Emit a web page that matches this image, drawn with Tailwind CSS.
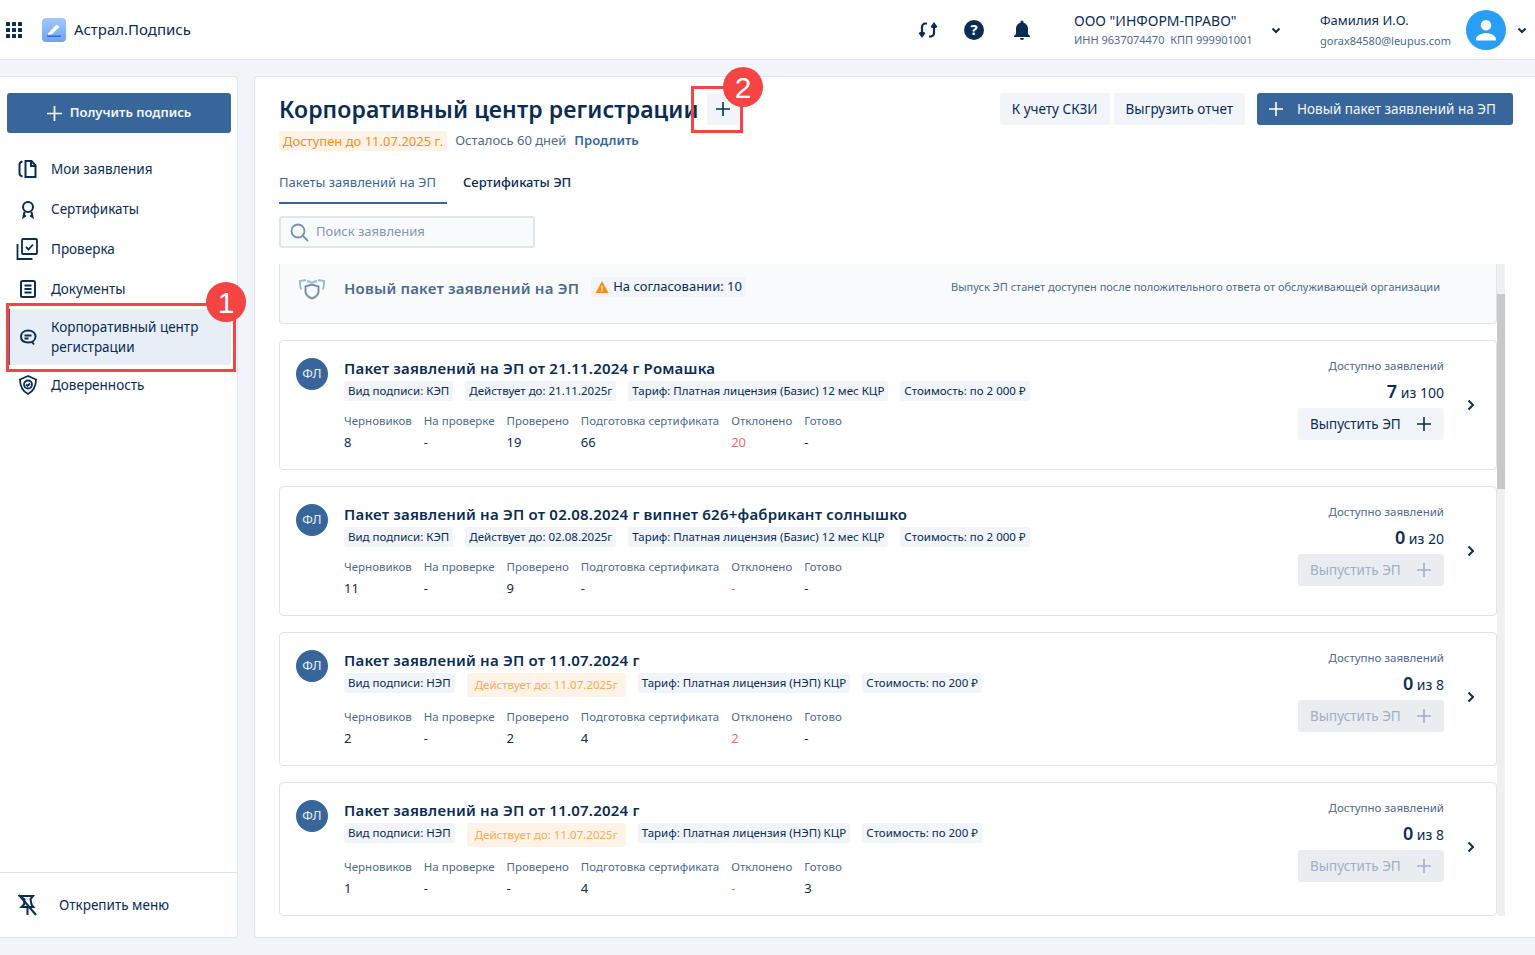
<!DOCTYPE html>
<html lang="ru">
<head>
  <meta charset="UTF-8" />
  <title>Астрал.Подпись</title>
  <script src="https://cdn.jsdelivr.net/npm/@tailwindcss/browser@4"></script>
</head>
<body class="relative h-[955px] w-[1535px] overflow-hidden bg-[#f1f4f8] font-['Noto_Sans',sans-serif] text-[#0b2c55]">

  <!-- Header -->
  <header class="flex h-[60px] items-center border-b border-[#dfe4ea] bg-white">
    <svg class="ml-[6px] h-4 w-4 fill-[#0b2c55]" viewBox="0 0 16 16">
      <rect x="0" y="0" width="4" height="4" rx=".6"/><rect x="6" y="0" width="4" height="4" rx=".6"/><rect x="12" y="0" width="4" height="4" rx=".6"/>
      <rect x="0" y="6" width="4" height="4" rx=".6"/><rect x="6" y="6" width="4" height="4" rx=".6"/><rect x="12" y="6" width="4" height="4" rx=".6"/>
      <rect x="0" y="12" width="4" height="4" rx=".6"/><rect x="6" y="12" width="4" height="4" rx=".6"/><rect x="12" y="12" width="4" height="4" rx=".6"/>
    </svg>
    <div class="ml-[20px] flex h-6 w-6 items-center justify-center rounded-[4px] bg-gradient-to-b from-[#a3c8fb] to-[#6ea2f7]">
      <svg class="h-6 w-6" viewBox="0 0 24 24"><path d="M6 15.5 14.5 6.5l3 2.6L9.5 16.5H6z" fill="#fff"/><rect x="5" y="17.500" width="14" height="1.500" fill="#2f6fd0"/></svg>
    </div>
    <span class="ml-2 text-[15px] text-[#0b2c55]">Астрал.Подпись</span>

    <div class="ml-auto flex items-center">
      <svg class="h-6 w-6" viewBox="0 0 24 24" fill="none" stroke="#0b2c55" stroke-width="2.200"><path d="M11 5.500H9.500A3.500 3.500 0 0 0 6 9v9"/><path d="M3.500 14.500 6 18l2.500-3.500" fill="#0b2c55"/><path d="M13 18.500h1.500A3.500 3.500 0 0 0 18 15V6"/><path d="M15.500 9.500 18 6l2.500 3.500" fill="#0b2c55"/></svg>
      <div class="ml-6 flex h-5 w-5 items-center justify-center rounded-full bg-[#0b2c55] text-[15px] leading-none font-bold text-white">?</div>
      <svg class="ml-[26px] h-6 w-6 fill-[#0b2c55]" viewBox="0 0 24 24"><path d="M12 22a2 2 0 0 0 2-2h-4a2 2 0 0 0 2 2zm6-6v-5c0-3.100-1.600-5.600-4.500-6.300V4a1.500 1.500 0 0 0-3 0v.7C7.600 5.400 6 7.900 6 11v5l-2 2v1h16v-1z"/></svg>
    </div>

    <div class="ml-[40px] flex w-[192px] flex-col">
      <span class="text-[14px] leading-[20px]">ООО "ИНФОРМ-ПРАВО"</span>
      <span class="mt-[1px] text-[11px] leading-[16px] whitespace-nowrap text-[#4d6a8f]">ИНН 9637074470&nbsp;&nbsp;КПП 999901001</span>
    </div>
    <svg class="ml-[4px] h-3 w-3" viewBox="0 0 12 12" fill="none" stroke="#0b2c55" stroke-width="2"><path d="M2.500 4.500 6 8l3.500-3.500"/></svg>
    <div class="ml-[38px] flex w-[146px] flex-col">
      <span class="text-[13px] leading-[20px]">Фамилия И.О.</span>
      <span class="mt-[3px] text-[11px] leading-[16px] whitespace-nowrap text-[#4d6a8f]">gorax84580@leupus.com</span>
    </div>
    <div class="flex h-10 w-10 items-center justify-center rounded-full bg-[#2a9df4]">
      <svg class="h-7 w-7 fill-white" viewBox="0 0 24 24"><circle cx="12" cy="8" r="4.500"/><path d="M3.500 21v-1.500c0-3 5.600-5 8.500-5s8.500 2 8.500 5V21z"/></svg>
    </div>
    <svg class="mr-[7px] ml-[10px] h-3 w-3" viewBox="0 0 12 12" fill="none" stroke="#0b2c55" stroke-width="2"><path d="M2.500 4.500 6 8l3.500-3.500"/></svg>
  </header>

  <div class="mt-4 flex h-[862px] gap-4">
    <!-- Sidebar -->
    <aside class="flex w-[238px] flex-col rounded-r-[4px] border border-l-0 border-[#dfe4ea] bg-white">
      <div class="mt-4 ml-[7px] flex h-10 w-[224px] items-center justify-center gap-2 rounded-[3px] bg-[#38669a] text-[13px] font-semibold text-[#f4f7fa]">
        <svg class="h-[15px] w-[15px]" viewBox="0 0 15 15" stroke="#fff" stroke-width="1.700"><path d="M7.500 0v15M0 7.500h15"/></svg>
        Получить подпись
      </div>

      <nav class="mt-4 flex flex-col text-[13.500px]">
        <a class="flex h-10 items-center pl-[18px]">
          <svg class="h-5 w-5" viewBox="0 0 20 20" fill="none" stroke="#0b2c55" stroke-width="2"><path d="M4.500 2.500C2.500 3 1.500 4 1.500 5.500v9c0 1.500 1 2.500 3 3"/><path d="M7.500 2h6l4 4.500V18h-10z"/><path d="M13 2v5h4.500"/></svg>
          <span class="ml-[13px]">Мои заявления</span>
        </a>
        <a class="flex h-10 items-center pl-[18px]">
          <svg class="h-5 w-5" viewBox="0 0 20 20" fill="none" stroke="#0b2c55" stroke-width="2"><circle cx="10" cy="8" r="5"/><path d="M6.500 13 5.500 18l2.500-1.500M13.500 13l1 5-2.500-1.500"/></svg>
          <span class="ml-[13px]">Сертификаты</span>
        </a>
        <a class="flex h-10 items-center pl-[16px]">
          <svg class="h-[22px] w-[22px]" viewBox="0 0 22 22" fill="none" stroke="#0b2c55" stroke-width="1.800"><rect x="6" y="1" width="15" height="15" rx="1"/><path d="M1.500 6v15h15"/><path d="m10 9 2.500 2.500 4.500-5"/></svg>
          <span class="ml-[13px]">Проверка</span>
        </a>
        <a class="flex h-10 items-center pl-[18px]">
          <svg class="h-5 w-5" viewBox="0 0 20 20" fill="none" stroke="#0b2c55" stroke-width="2"><rect x="3" y="2" width="14" height="16" rx="1.500"/><path d="M6.500 6.500h7M6.500 10h7M6.500 13.500h7"/></svg>
          <span class="ml-[13px]">Документы</span>
        </a>
        <a class="mt-[0px] ml-[8px] flex h-14 w-[223px] items-center rounded-r-[4px] border-l-2 border-[#38669a] bg-[#e8eef6] pl-[8px]">
          <svg class="h-5 w-5" viewBox="0 0 20 20" fill="none" stroke="#0b2c55" stroke-width="2"><path d="M10 3.500c4.500 0 7.500 2.500 7.500 6s-3 6-7 6c-5 0-7.500-2.500-7.500-6s3-6 7-6zM14 15l2 2.500"/><path d="M6.500 8.500h7M6.500 11.500h4"/></svg>
          <span class="ml-[13px] leading-[20px]">Корпоративный центр<br />регистрации</span>
        </a>
        <a class="flex h-10 items-center pl-[18px]">
          <svg class="h-5 w-5" viewBox="0 0 20 20" fill="none" stroke="#0b2c55" stroke-width="1.800"><path d="M10 1 2 4.500c0 7 2.500 11.500 8 14.500 5.500-3 8-7.500 8-14.500z"/><circle cx="10" cy="9.500" r="4"/><path d="m8 9.500 1.500 1.500 2.500-2.500"/></svg>
          <span class="ml-[13px]">Доверенность</span>
        </a>
      </nav>

      <div class="mt-auto flex h-[65px] items-center border-t border-[#dfe4ea] pl-[18px] text-[13.500px]">
        <svg class="h-[22px] w-[20px]" viewBox="0 0 20 22" fill="none" stroke="#0b2c55" stroke-width="2"><path d="M2 2h13l-2.500 3 1 5.500 2 2.500H3.500L6 10.500l.5-5z"/><path d="M9.500 13v8M1 1l17 20"/></svg>
        <span class="ml-[21px]">Открепить меню</span>
      </div>
    </aside>

    <!-- Main -->
    <main class="flex flex-1 flex-col rounded-l-[4px] border border-r-0 border-[#dfe4ea] bg-white pt-4 pl-6">
      <div class="flex items-start pr-[22px]">
        <div>
          <div class="flex h-8 items-center">
            <h1 class="text-[23px] font-semibold tracking-[0.1px] whitespace-nowrap">Корпоративный центр регистрации</h1>
            <div class="ml-[8px] flex h-8 w-8 items-center justify-center rounded-[3px] bg-[#f1f4f8]">
              <svg class="h-[14px] w-[14px]" viewBox="0 0 14 14" stroke="#0b2c55" stroke-width="1.600"><path d="M7 0v14M0 7h14"/></svg>
            </div>
          </div>
          <div class="mt-[6px] flex h-5 items-center text-[13px]">
            <span class="rounded-[3px] bg-[#fff3e8] px-1 leading-[20px] text-[#f98e16]">Доступен до 11.07.2025 г.</span>
            <span class="ml-2 text-[#4d6a8f]">Осталось 60 дней</span>
            <span class="ml-2 font-semibold text-[#38669a]">Продлить</span>
          </div>
        </div>
        <div class="ml-auto flex items-center text-[13.500px]">
          <div class="flex h-8 items-center rounded-[3px] bg-[#f1f4f8] px-3">К учету СКЗИ</div>
          <div class="ml-1 flex h-8 items-center rounded-[3px] bg-[#f1f4f8] px-3">Выгрузить отчет</div>
          <div class="ml-3 flex h-8 w-[256px] items-center rounded-[3px] bg-[#38669a] pl-3 text-[#f4f7fa]">
            <svg class="h-[14px] w-[14px]" viewBox="0 0 14 14" stroke="#fff" stroke-width="1.600"><path d="M7 0v14M0 7h14"/></svg>
            <span class="ml-[14px]">Новый пакет заявлений на ЭП</span>
          </div>
        </div>
      </div>

      <div class="mt-[21px] flex text-[13px]">
        <div class="h-[32px] w-[168px] border-b-2 border-[#38669a] leading-[20px] text-[#38669a]">Пакеты заявлений на ЭП</div>
        <div class="ml-4 leading-[20px] font-medium">Сертификаты ЭП</div>
      </div>

      <div class="mt-3 flex h-8 w-[256px] items-center rounded-[3px] border-2 border-[#dfe5ec] bg-[#f9fafc] pl-[9px] text-[13px] text-[#8097b3]">
        <svg class="h-[19px] w-[19px]" viewBox="0 0 19 19" fill="none" stroke="#7490b2" stroke-width="1.800"><circle cx="8" cy="8" r="6.500"/><path d="m13 13 5 5"/></svg>
        <span class="ml-[7px]">Поиск заявления</span>
      </div>

      <!-- List -->
      <div class="relative mt-4 flex h-[652px] overflow-hidden">
        <div class="flex w-[1218px] flex-col gap-4">
          <div class="flex h-[60px] shrink-0 items-start rounded-b-[4px] border border-t-0 border-[#dfe4ea] bg-[#f9fafc] pt-[13px] pl-[17px]">
            <svg class="h-[24px] w-[30px]" viewBox="0 0 30 24" fill="none" stroke-width="2"><path d="M9 3 3 4v3c0 2 .5 4 1.500 5.500M21 3l6 1v3c0 2-.5 4-1.500 5.500M10 4c2 .5 3 1 5 1.500 2-.5 3-1 5-1.500" stroke="#9cbbdc"/><path d="M15 7.500 8.500 9.500v5c0 3 2.500 5.500 6.500 7 4-1.500 6.500-4 6.500-7v-5z" stroke="#7c90a8"/></svg>
            <span class="ml-[17px] text-[15px] font-semibold tracking-[0.2px] text-[#4d6a8f]">Новый пакет заявлений на ЭП</span>
            <span class="ml-3 flex h-5 items-center rounded-[3px] bg-[#f1f4f8] px-1 text-[13px]">
              <svg class="mr-1 h-[14px] w-[14px] fill-[#f98e16]" viewBox="0 0 14 14"><path d="M7 1 .500 13h13z"/><path d="M6.400 5.500h1.200v4H6.400zM6.400 10.300h1.200v1.200H6.400z" fill="#fff"/></svg>
              На согласовании: 10
            </span>
            <span class="mt-[2px] mr-[56px] ml-auto text-[11px] text-[#4d6a8f]">Выпуск ЭП станет доступен после положительного ответа от обслуживающей организации</span>
          </div>

          <!-- Card 1 -->
          <div class="flex h-[130px] shrink-0 rounded-[4px] border border-[#dfe4ea] bg-white pt-[17px] pl-4">
            <div class="flex h-8 w-8 shrink-0 items-center justify-center rounded-full bg-[#38669a] text-[13px] text-[#e8eef6]">ФЛ</div>
            <div class="ml-4 flex-1">
              <div class="text-[15px] leading-[20px] font-semibold tracking-[0.2px]">Пакет заявлений на ЭП от 21.11.2024 г Ромашка</div>
              <div class="mt-[3px] flex items-start gap-3 text-[11.500px] leading-[20px]">
                <span class="rounded-[3px] bg-[#f1f4f8] px-1">Вид подписи: КЭП</span>
                <span class="rounded-[3px] bg-[#f1f4f8] px-1">Действует до: 21.11.2025г</span>
                <span class="rounded-[3px] bg-[#f1f4f8] px-1">Тариф: Платная лицензия (Базис) 12 мес КЦР</span>
                <span class="rounded-[3px] bg-[#f1f4f8] px-1">Стоимость: по 2 000 ₽</span>
              </div>
              <div class="mt-[10px] flex gap-3 text-[11.500px] leading-[20px] text-[#4d6a8f]">
                <div>Черновиков<div class="mt-[1px] text-[13px] text-[#0b2c55]">8</div></div>
                <div>На проверке<div class="mt-[1px] text-[13px] text-[#0b2c55]">-</div></div>
                <div>Проверено<div class="mt-[1px] text-[13px] text-[#0b2c55]">19</div></div>
                <div>Подготовка сертификата<div class="mt-[1px] text-[13px] text-[#0b2c55]">66</div></div>
                <div>Отклонено<div class="mt-[1px] text-[13px] text-[#f56c6c]">20</div></div>
                <div>Готово<div class="mt-[1px] text-[13px] text-[#0b2c55]">-</div></div>
              </div>
            </div>
            <div class="flex w-[146px] shrink-0 flex-col items-end">
              <span class="mt-[-2px] text-[11.500px] leading-[20px] text-[#4d6a8f]">Доступно заявлений</span>
              <span class="mt-[2px] text-[14px] leading-[26px]"><b class="text-[18px] font-semibold">7</b> из 100</span>
              <div class="mt-[2px] flex h-8 w-[146px] items-center rounded-[3px] bg-[#f1f4f8] pl-3 text-[13.500px]">Выпустить ЭП<svg class="ml-auto mr-[13px] h-[14px] w-[14px]" viewBox="0 0 14 14" stroke="#0b2c55" stroke-width="1.600"><path d="M7 0v14M0 7h14"/></svg></div>
            </div>
            <svg class="mt-[41px] mr-[21px] ml-[23px] h-3 w-2" viewBox="0 0 8 12" fill="none" stroke="#0b2c55" stroke-width="2"><path d="m1.500 1.500 4.500 4.500-4.500 4.500"/></svg>
          </div>

          <!-- Card 2 -->
          <div class="flex h-[130px] shrink-0 rounded-[4px] border border-[#dfe4ea] bg-white pt-[17px] pl-4">
            <div class="flex h-8 w-8 shrink-0 items-center justify-center rounded-full bg-[#38669a] text-[13px] text-[#e8eef6]">ФЛ</div>
            <div class="ml-4 flex-1">
              <div class="text-[15px] leading-[20px] font-semibold tracking-[0.2px]">Пакет заявлений на ЭП от 02.08.2024 г випнет 626+фабрикант солнышко</div>
              <div class="mt-[3px] flex items-start gap-3 text-[11.500px] leading-[20px]">
                <span class="rounded-[3px] bg-[#f1f4f8] px-1">Вид подписи: КЭП</span>
                <span class="rounded-[3px] bg-[#f1f4f8] px-1">Действует до: 02.08.2025г</span>
                <span class="rounded-[3px] bg-[#f1f4f8] px-1">Тариф: Платная лицензия (Базис) 12 мес КЦР</span>
                <span class="rounded-[3px] bg-[#f1f4f8] px-1">Стоимость: по 2 000 ₽</span>
              </div>
              <div class="mt-[10px] flex gap-3 text-[11.500px] leading-[20px] text-[#4d6a8f]">
                <div>Черновиков<div class="mt-[1px] text-[13px] text-[#0b2c55]">11</div></div>
                <div>На проверке<div class="mt-[1px] text-[13px] text-[#0b2c55]">-</div></div>
                <div>Проверено<div class="mt-[1px] text-[13px] text-[#0b2c55]">9</div></div>
                <div>Подготовка сертификата<div class="mt-[1px] text-[13px] text-[#0b2c55]">-</div></div>
                <div>Отклонено<div class="mt-[1px] text-[13px] text-[#f56c6c]">-</div></div>
                <div>Готово<div class="mt-[1px] text-[13px] text-[#0b2c55]">-</div></div>
              </div>
            </div>
            <div class="flex w-[146px] shrink-0 flex-col items-end">
              <span class="mt-[-2px] text-[11.500px] leading-[20px] text-[#4d6a8f]">Доступно заявлений</span>
              <span class="mt-[2px] text-[14px] leading-[26px]"><b class="text-[18px] font-semibold">0</b> из 20</span>
              <div class="mt-[2px] flex h-8 w-[146px] items-center rounded-[3px] bg-[#e9edf2] pl-3 text-[13.500px] text-[#9fb0c5]">Выпустить ЭП<svg class="ml-auto mr-[13px] h-[14px] w-[14px]" viewBox="0 0 14 14" stroke="#9fb0c5" stroke-width="1.600"><path d="M7 0v14M0 7h14"/></svg></div>
            </div>
            <svg class="mt-[41px] mr-[21px] ml-[23px] h-3 w-2" viewBox="0 0 8 12" fill="none" stroke="#0b2c55" stroke-width="2"><path d="m1.500 1.500 4.500 4.500-4.500 4.500"/></svg>
          </div>

          <!-- Card 3 -->
          <div class="flex h-[134px] shrink-0 rounded-[4px] border border-[#dfe4ea] bg-white pt-[17px] pl-4">
            <div class="flex h-8 w-8 shrink-0 items-center justify-center rounded-full bg-[#38669a] text-[13px] text-[#e8eef6]">ФЛ</div>
            <div class="ml-4 flex-1">
              <div class="text-[15px] leading-[20px] font-semibold tracking-[0.2px]">Пакет заявлений на ЭП от 11.07.2024 г</div>
              <div class="mt-[3px] flex items-start gap-3 text-[11.500px] leading-[20px]">
                <span class="rounded-[3px] bg-[#f1f4f8] px-1">Вид подписи: НЭП</span>
                <span class="rounded-[3px] bg-[#fff3e8] px-2 leading-[24px] text-[#fba94f]">Действует до: 11.07.2025г</span>
                <span class="rounded-[3px] bg-[#f1f4f8] px-1">Тариф: Платная лицензия (НЭП) КЦР</span>
                <span class="rounded-[3px] bg-[#f1f4f8] px-1">Стоимость: по 200 ₽</span>
              </div>
              <div class="mt-[10px] flex gap-3 text-[11.500px] leading-[20px] text-[#4d6a8f]">
                <div>Черновиков<div class="mt-[1px] text-[13px] text-[#0b2c55]">2</div></div>
                <div>На проверке<div class="mt-[1px] text-[13px] text-[#0b2c55]">-</div></div>
                <div>Проверено<div class="mt-[1px] text-[13px] text-[#0b2c55]">2</div></div>
                <div>Подготовка сертификата<div class="mt-[1px] text-[13px] text-[#0b2c55]">4</div></div>
                <div>Отклонено<div class="mt-[1px] text-[13px] text-[#f56c6c]">2</div></div>
                <div>Готово<div class="mt-[1px] text-[13px] text-[#0b2c55]">-</div></div>
              </div>
            </div>
            <div class="flex w-[146px] shrink-0 flex-col items-end">
              <span class="mt-[-2px] text-[11.500px] leading-[20px] text-[#4d6a8f]">Доступно заявлений</span>
              <span class="mt-[2px] text-[14px] leading-[26px]"><b class="text-[18px] font-semibold">0</b> из 8</span>
              <div class="mt-[2px] flex h-8 w-[146px] items-center rounded-[3px] bg-[#e9edf2] pl-3 text-[13.500px] text-[#9fb0c5]">Выпустить ЭП<svg class="ml-auto mr-[13px] h-[14px] w-[14px]" viewBox="0 0 14 14" stroke="#9fb0c5" stroke-width="1.600"><path d="M7 0v14M0 7h14"/></svg></div>
            </div>
            <svg class="mt-[41px] mr-[21px] ml-[23px] h-3 w-2" viewBox="0 0 8 12" fill="none" stroke="#0b2c55" stroke-width="2"><path d="m1.500 1.500 4.500 4.500-4.500 4.500"/></svg>
          </div>

          <!-- Card 4 -->
          <div class="flex h-[134px] shrink-0 rounded-[4px] border border-[#dfe4ea] bg-white pt-[17px] pl-4">
            <div class="flex h-8 w-8 shrink-0 items-center justify-center rounded-full bg-[#38669a] text-[13px] text-[#e8eef6]">ФЛ</div>
            <div class="ml-4 flex-1">
              <div class="text-[15px] leading-[20px] font-semibold tracking-[0.2px]">Пакет заявлений на ЭП от 11.07.2024 г</div>
              <div class="mt-[3px] flex items-start gap-3 text-[11.500px] leading-[20px]">
                <span class="rounded-[3px] bg-[#f1f4f8] px-1">Вид подписи: НЭП</span>
                <span class="rounded-[3px] bg-[#fff3e8] px-2 leading-[24px] text-[#fba94f]">Действует до: 11.07.2025г</span>
                <span class="rounded-[3px] bg-[#f1f4f8] px-1">Тариф: Платная лицензия (НЭП) КЦР</span>
                <span class="rounded-[3px] bg-[#f1f4f8] px-1">Стоимость: по 200 ₽</span>
              </div>
              <div class="mt-[10px] flex gap-3 text-[11.500px] leading-[20px] text-[#4d6a8f]">
                <div>Черновиков<div class="mt-[1px] text-[13px] text-[#0b2c55]">1</div></div>
                <div>На проверке<div class="mt-[1px] text-[13px] text-[#0b2c55]">-</div></div>
                <div>Проверено<div class="mt-[1px] text-[13px] text-[#0b2c55]">-</div></div>
                <div>Подготовка сертификата<div class="mt-[1px] text-[13px] text-[#0b2c55]">4</div></div>
                <div>Отклонено<div class="mt-[1px] text-[13px] text-[#f56c6c]">-</div></div>
                <div>Готово<div class="mt-[1px] text-[13px] text-[#0b2c55]">3</div></div>
              </div>
            </div>
            <div class="flex w-[146px] shrink-0 flex-col items-end">
              <span class="mt-[-2px] text-[11.500px] leading-[20px] text-[#4d6a8f]">Доступно заявлений</span>
              <span class="mt-[2px] text-[14px] leading-[26px]"><b class="text-[18px] font-semibold">0</b> из 8</span>
              <div class="mt-[2px] flex h-8 w-[146px] items-center rounded-[3px] bg-[#e9edf2] pl-3 text-[13.500px] text-[#9fb0c5]">Выпустить ЭП<svg class="ml-auto mr-[13px] h-[14px] w-[14px]" viewBox="0 0 14 14" stroke="#9fb0c5" stroke-width="1.600"><path d="M7 0v14M0 7h14"/></svg></div>
            </div>
            <svg class="mt-[41px] mr-[21px] ml-[23px] h-3 w-2" viewBox="0 0 8 12" fill="none" stroke="#0b2c55" stroke-width="2"><path d="m1.500 1.500 4.500 4.500-4.500 4.500"/></svg>
          </div>
        </div>

        <!-- Scrollbar -->
        <div class="h-full w-2 bg-[#f0f0f0]">
          <div class="mt-[30px] h-[195px] w-2 bg-[#c8c8c8]"></div>
        </div>
      </div>
    </main>
  </div>

  <!-- Annotation callouts -->
  <div class="absolute top-[303px] left-[6px] h-[69px] w-[230px] border-[3px] border-[#f44444]"></div>
  <div class="absolute top-[282px] left-[206px] flex h-10 w-10 items-center justify-center rounded-full bg-[#f44444] font-['Liberation_Sans',sans-serif] text-[30px] text-white">1</div>
  <div class="absolute top-[86px] left-[691px] h-[47px] w-[52px] border-[3px] border-[#f44444]"></div>
  <div class="absolute top-[67px] left-[723px] flex h-10 w-10 items-center justify-center rounded-full bg-[#f44444] font-['Liberation_Sans',sans-serif] text-[30px] text-white">2</div>
</body>
</html>
